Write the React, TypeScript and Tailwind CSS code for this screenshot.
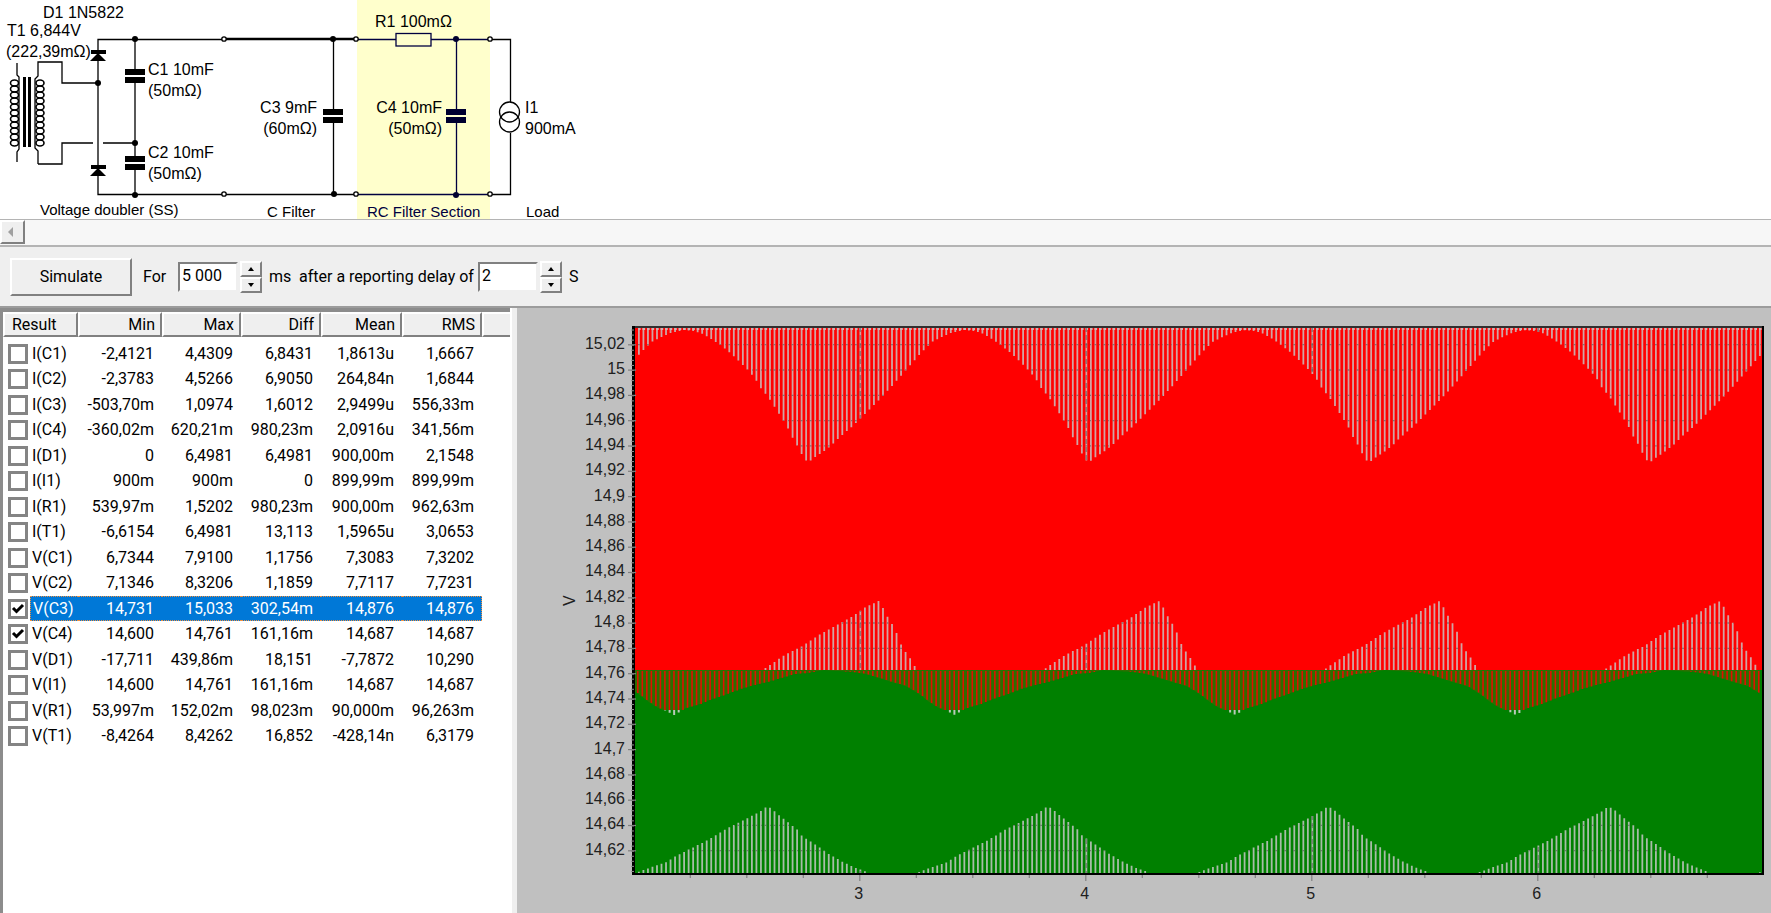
import { useState } from "react";

type Point = [number, number];

const columns = ["Min", "Max", "Diff", "Mean", "RMS"];

const results = [
  { name: "I(C1)", values: ["-2,4121", "4,4309", "6,8431", "1,8613u", "1,6667"] },
  { name: "I(C2)", values: ["-2,3783", "4,5266", "6,9050", "264,84n", "1,6844"] },
  { name: "I(C3)", values: ["-503,70m", "1,0974", "1,6012", "2,9499u", "556,33m"] },
  { name: "I(C4)", values: ["-360,02m", "620,21m", "980,23m", "2,0916u", "341,56m"] },
  { name: "I(D1)", values: ["0", "6,4981", "6,4981", "900,00m", "2,1548"] },
  { name: "I(I1)", values: ["900m", "900m", "0", "899,99m", "899,99m"] },
  { name: "I(R1)", values: ["539,97m", "1,5202", "980,23m", "900,00m", "962,63m"] },
  { name: "I(T1)", values: ["-6,6154", "6,4981", "13,113", "1,5965u", "3,0653"] },
  { name: "V(C1)", values: ["6,7344", "7,9100", "1,1756", "7,3083", "7,3202"] },
  { name: "V(C2)", values: ["7,1346", "8,3206", "1,1859", "7,7117", "7,7231"] },
  { name: "V(C3)", values: ["14,731", "15,033", "302,54m", "14,876", "14,876"] },
  { name: "V(C4)", values: ["14,600", "14,761", "161,16m", "14,687", "14,687"] },
  { name: "V(D1)", values: ["-17,711", "439,86m", "18,151", "-7,7872", "10,290"] },
  { name: "V(I1)", values: ["14,600", "14,761", "161,16m", "14,687", "14,687"] },
  { name: "V(R1)", values: ["53,997m", "152,02m", "98,023m", "90,000m", "96,263m"] },
  { name: "V(T1)", values: ["-8,4264", "8,4262", "16,852", "-428,14n", "6,3179"] },
];

const Capacitor = ({ x, y, color = "#000" }: { x: number; y: number; color?: string }) => (
  <g fill={color}>
    <rect x={x - 10} y={y - 7} width="20" height="6" />
    <rect x={x - 10} y={y + 1} width="20" height="6" />
  </g>
);

const Diode = ({ y }: { y: number }) => (
  <g>
    <rect x="91" y={y} width="15" height="4" />
    <path d={`M98 ${y + 3}L106 ${y + 11}H90Z`} />
  </g>
);

const Terminal = ({ x, y }: { x: number; y: number }) => (
  <circle cx={x} cy={y} r="2.2" fill="#fff" stroke="#000" strokeWidth="1.3" />
);

const turns = Array.from({ length: 11 }, (_, i) => 83 + i * 6);

const Schematic = () => (
  <svg
    width="620"
    height="219"
    viewBox="0 0 620 219"
    className="overflow-visible"
    role="img"
    aria-label="Power supply schematic"
    fontFamily='"Liberation Sans", Arial, sans-serif'
    fontSize="16"
  >
    <rect x="357" y="0" width="133" height="219" fill="#ffffcc" />

    {/* transformer */}
    <g fill="none" stroke="#000" strokeWidth="1.3">
      <path d="M17 63V75L19 77V149L17 152V162" />
      <path d="M38 164V151L35 148V79L38 76V62H62V83H98" />
      <path d="M38 164H62V143H93M103 143H135" />
      {turns.map((y) => (
        <g key={y} strokeWidth="1.6">
          <ellipse cx="14.5" cy={y} rx="4" ry="3" />
          <ellipse cx="40" cy={y} rx="4" ry="3" />
        </g>
      ))}
    </g>
    <rect x="23" y="77" width="3" height="70" />
    <rect x="28" y="77" width="3" height="70" />

    {/* wires */}
    <g fill="none" stroke="#000" strokeWidth="1.3">
      <path d="M224 39.5H98V194.5H357" />
      <path d="M135 39V194M333.5 39V194" />
      <path d="M490 39.5H510.5V102M510.5 133V194.5H490" />
      <ellipse cx="509.5" cy="112" rx="10" ry="10" />
      <ellipse cx="509.5" cy="122" rx="10" ry="10" />
    </g>
    <path d="M224 39H357" stroke="#000" strokeWidth="2.4" />
    <g fill="none" stroke="#000040" strokeWidth="1.3">
      <path d="M357 39.5H396M431 39.5H490M357 194.5H490M456.5 39V194" />
      <rect x="396" y="33.5" width="35" height="12.5" />
    </g>

    <Diode y={50} />
    <Diode y={165} />
    <Capacitor x={135} y={76} />
    <rect x="126" y="75" width="18" height="2" fill="#fff" />
    <Capacitor x={135} y={163} />
    <rect x="126" y="162" width="18" height="2" fill="#fff" />
    <Capacitor x={333} y={116} />
    <rect x="324" y="115" width="18" height="2" fill="#fff" />
    <Capacitor x={456} y={116} color="#000030" />
    <rect x="447" y="115" width="18" height="2" fill="#ffffcc" />

    {[[135, 39], [98, 83], [135, 143], [135, 195], [333, 39], [334, 194]].map(([x, y]) => (
      <circle key={`${x}-${y}`} cx={x} cy={y} r="3" />
    ))}
    <circle cx="456" cy="39" r="3" fill="#000030" />
    <circle cx="456" cy="195" r="3" fill="#000030" />
    <Terminal x={224} y={39} />
    <Terminal x={224} y={194} />
    <Terminal x={356} y={39} />
    <Terminal x={356} y={194} />
    <Terminal x={490} y={39} />
    <Terminal x={490} y={194} />

    <text x="43" y="18">D1 1N5822</text>
    <text x="7" y="36">T1 6,844V</text>
    <text x="6" y="57">(222,39mΩ)</text>
    <text x="148" y="75">C1 10mF</text>
    <text x="148" y="96">(50mΩ)</text>
    <text x="148" y="158">C2 10mF</text>
    <text x="148" y="179">(50mΩ)</text>
    <text x="317" y="113" textAnchor="end">C3 9mF</text>
    <text x="317" y="134" textAnchor="end">(60mΩ)</text>
    <text x="375" y="27">R1 100mΩ</text>
    <text x="442" y="113" textAnchor="end">C4 10mF</text>
    <text x="442" y="134" textAnchor="end">(50mΩ)</text>
    <text x="525" y="113">I1</text>
    <text x="525" y="134">900mA</text>
    <g fontSize="15">
      <text x="40" y="215">Voltage doubler (SS)</text>
      <text x="267" y="217">C Filter</text>
      <text x="367" y="217" fill="#000040">RC Filter Section</text>
      <text x="526" y="217">Load</text>
    </g>
  </svg>
);

// plot area
const LEFT = 635;
const RIGHT = 1762;
const TOP = 328;
const BOTTOM = 874;
const SPLIT = 671;
const PERIOD = 280.5;

const xOf = (t: number) => 633.7 + (t - 2) * 226;
const yOf = (v: number) => 851.7 - (v - 14.62) * 1265;

// One ripple period of each envelope, x relative to its tip
const redUpper: Point[] = [
  [-125, 331], [-116, 332], [-108, 334], [-99, 339], [-90, 345], [-81, 352], [-72, 360], [-63, 369],
  [-54, 379], [-49, 388], [-40, 399], [-31, 413], [-22, 427], [-18, 436], [-13, 444], [-9, 452],
  [-4, 461], [0, 463], [5, 459], [14, 453], [23, 446], [31, 438], [44, 427], [57, 414], [71, 400],
  [84, 386], [98, 370], [112, 354], [123, 343], [133, 338], [142, 334], [151, 332], [156, 331],
];
const redLower: Point[] = [
  [-116, 671], [-94, 656], [-76, 647], [-58, 635], [-40, 625], [-27, 618], [-13, 608], [0, 602],
  [5, 610], [9, 618], [14, 626], [18, 634], [23, 647], [27, 653], [32, 660], [36, 667], [40, 671],
  [165, 671],
];
const greenUpper: Point[] = [
  [0, 716], [13, 709], [27, 705], [39, 700], [54, 695], [67, 690], [81, 686], [94, 683], [108, 679],
  [121, 675], [135, 674], [150, 671], [179, 673], [193, 675], [206, 679], [219, 683], [233, 687],
  [246, 695], [255, 702], [264, 708], [281, 716],
];
const greenLower: Point[] = [
  [-130, 874], [-117, 869], [-99, 863], [-90, 857], [-72, 848], [-58, 841], [-40, 830], [-22, 821],
  [-5, 812], [0, 808], [5, 809], [14, 817], [23, 824], [32, 831], [36, 837], [50, 846], [63, 855],
  [77, 863], [90, 869], [104, 874], [151, 874],
];

const sample = (curve: Point[], tip: number, x: number) => {
  const start = curve[0][0];
  let d = (x - tip - start) % PERIOD;
  if (d < 0) d += PERIOD;
  d += start;
  for (let i = 1; i < curve.length; i++) {
    const [x1, y1] = curve[i];
    const [x0, y0] = curve[i - 1];
    if (d <= x1) return y0 + ((d - x0) / (x1 - x0)) * (y1 - y0);
  }
  return curve[curve.length - 1][1];
};

const stripes: number[] = [];
for (let x = 638; x < RIGHT - 1; x += 4.52) stripes.push(x);

const bars = (from: (x: number) => number, to: (x: number) => number, w: number, shift = 0) =>
  stripes
    .map((s) => {
      const x = s + shift;
      const a = from(x);
      const b = to(x);
      return b - a > 0.5 ? `M${x.toFixed(2)} ${a.toFixed(1)}h${w}V${b.toFixed(1)}h${-w}z` : "";
    })
    .join("");

const upperBars = bars(() => TOP, (x) => sample(redUpper, 808, x), 1.8);
const comb = bars(() => TOP, () => TOP + 3, 2.6);
const lowerBars = bars((x) => sample(redLower, 877.7, x), () => SPLIT, 1.8);
const greenBars = bars((x) => sample(greenLower, 765, x), () => BOTTOM, 1.8);
const mixBars = bars(() => SPLIT + 1, (x) => Math.min(711, sample(greenUpper, 673, x)), 1.6, -1);
const tipBars = bars(() => 711, (x) => sample(greenUpper, 673, x), 2, -1);

let mixArea = `M${LEFT} ${SPLIT}`;
for (let x = LEFT; x <= RIGHT; x += 3) mixArea += `L${x} ${Math.min(711, sample(greenUpper, 673, x))}`;
mixArea += `V${SPLIT}z`;

const labels: number[] = [];
for (let i = 0; i <= 20; i++) labels.push((1462 + i * 2) / 100);
const minor: number[] = [];
for (let i = 0; i < 108; i++) minor.push(14.604 + i * 0.004);
const quarters = Array.from({ length: 19 }, (_, i) => 2.25 + i * 0.25);

const Chart = () => (
  <svg
    viewBox="517 309 1254 604"
    className="block h-auto w-full"
    role="img"
    aria-label="Voltage over time"
    fontFamily='"Liberation Sans", Arial, sans-serif'
    fontSize="16"
  >
    <defs>
      <clipPath id="gaps">
        <path d={upperBars + lowerBars + greenBars} />
      </clipPath>
    </defs>
    <rect x={LEFT} y={TOP} width={RIGHT - LEFT} height={SPLIT - TOP} fill="#ff0000" />
    <rect x={LEFT} y={SPLIT} width={RIGHT - LEFT} height={BOTTOM - SPLIT} fill="#008000" />
    <path d={upperBars + lowerBars} fill="#d0a4a4" />
    <path d={comb} fill="#d0b4b4" />
    <path d={greenBars} fill="#a8bca8" />
    <path d={mixArea} fill="#2c7000" />
    <path d={mixBars} fill="#e01000" />
    <path d={tipBars} fill="#b8c8b8" />

    {/* grid shows only through the gaps */}
    <g clipPath="url(#gaps)" stroke="#606060" strokeWidth="1.3">
      {labels.map((v) => (
        <path key={v} d={`M${LEFT} ${yOf(v)}H${RIGHT}`} strokeDasharray="6 3" opacity="0.7" />
      ))}
      {[3, 4, 5, 6].map((t) => (
        <path key={t} d={`M${xOf(t)} ${TOP}V${BOTTOM}`} strokeWidth="3" strokeDasharray="5 3" opacity="0.6" />
      ))}
    </g>

    {/* frame */}
    <rect x="632" y="327" width="1132" height="2" fill="#303030" />
    <rect x="632" y="327" width="3" height="549" />
    <rect x="1762" y="327" width="2" height="549" />
    <rect x="632" y="874" width="1132" height="2" />

    {minor.map((v) => (
      <rect key={v} x="631" y={yOf(v)} width="3" height="1" fill="#909090" />
    ))}
    {labels.map((v) => (
      <g key={v}>
        <rect x="628" y={yOf(v) - 0.5} width="8" height="1.2" fill="#808080" />
        <text x="625" y={yOf(v) + 4} textAnchor="end" fill="#202020">
          {String(v).replace(".", ",")}
        </text>
      </g>
    ))}
    {quarters.map((t) => (
      <rect key={t} x={xOf(t) - 0.5} y="876" width="1.2" height={t % 1 === 0 ? 6 : 3} fill="#808080" />
    ))}
    {[3, 4, 5, 6].map((t) => (
      <text key={t} x={xOf(t) - 1} y="900" textAnchor="middle" fill="#202020">
        {t}
      </text>
    ))}
    <text transform="translate(575 607) rotate(-90)" fill="#202020">V</text>
  </svg>
);

const raised = "border-2 border-t-white border-l-white border-r-[#808080] border-b-[#808080] bg-[#efefef]";

const Spinner = ({ label, value, onChange }: { label: string; value: string; onChange: (v: string) => void }) => {
  const step = (delta: number) => {
    const next = Math.max(0, Number(value.replace(/\s/g, "")) + delta);
    onChange(String(next).replace(/\B(?=(\d{3})+$)/g, " "));
  };
  return (
    <div className="flex items-center gap-0.5">
      <input
        aria-label={label}
        value={value}
        onChange={(e) => onChange(e.target.value)}
        className="h-[30px] w-[60px] border-2 border-t-[#808080] border-r-[#efefef] border-b-[#efefef] border-l-[#808080] bg-white pb-0.5 pl-0.5 outline-none"
      />
      <div className="flex flex-col">
        <button aria-label={`Increase ${label}`} onClick={() => step(1)} className={`flex h-4 w-[22px] items-center justify-center ${raised}`}>
          <svg width="6" height="4"><path d="M3 0L6 4H0Z" /></svg>
        </button>
        <button aria-label={`Decrease ${label}`} onClick={() => step(-1)} className={`flex h-4 w-[22px] items-center justify-center ${raised}`}>
          <svg width="6" height="4"><path d="M3 4L6 0H0Z" /></svg>
        </button>
      </div>
    </div>
  );
};

const App = () => {
  const [duration, setDuration] = useState("5 000");
  const [delay, setDelay] = useState("2");
  const [selected, setSelected] = useState("V(C3)");
  const [checked, setChecked] = useState<string[]>(["V(C3)", "V(C4)"]);

  const toggle = (name: string) => {
    setChecked(checked.includes(name) ? checked.filter((n) => n !== name) : [...checked, name]);
  };

  return (
    <div className="flex min-h-screen flex-col bg-[#efefef] font-['Roboto','Liberation_Sans',sans-serif] text-base leading-5 text-black">
      <div className="bg-white">
        <Schematic />
      </div>

      <div className="flex h-7 items-start border-t border-b-2 border-[#b4b4b4] bg-[#f7f7f7]">
        <button aria-label="Scroll left" className={`flex h-6 w-[25px] items-center justify-center pr-1 ${raised}`}>
          <svg width="7" height="12"><path d="M6 1V11L1 6Z" fill="#a0a0a0" /></svg>
        </button>
      </div>

      <div className="flex h-[59px] items-center pl-[10px]">
        <button className={`h-[38px] w-[122px] ${raised}`}>Simulate</button>
        <span className="ml-[11px] w-[35px]">For</span>
        <Spinner label="Duration" value={duration} onChange={setDuration} />
        <span className="ml-[7px] w-[30px]">ms</span>
        <span className="w-[179px] whitespace-nowrap">after a reporting delay of</span>
        <Spinner label="Delay" value={delay} onChange={setDelay} />
        <span className="ml-[7px]">S</span>
      </div>

      <div className="flex flex-1 items-stretch border-t-2 border-[#9c9c9c]">
        <div className="w-[510px] shrink-0 border-t-4 border-l-[3px] border-[#8c8c8c] bg-white">
          <table className="w-full table-fixed border-separate border-spacing-0">
            <colgroup>
              <col className="w-[75px]" />
              <col className="w-[84px]" />
              <col className="w-[79px]" />
              <col className="w-[80px]" />
              <col className="w-[81px]" />
              <col className="w-[80px]" />
              <col />
            </colgroup>
            <thead>
              <tr className="h-[25px]">
                <th className={`pl-[7px] text-left font-normal ${raised}`}>Result</th>
                {columns.map((c) => (
                  <th key={c} className={`pr-[5px] text-right font-normal ${raised}`}>{c}</th>
                ))}
                <th className="border-t-2 border-b-2 border-l-2 border-t-white border-b-[#808080] border-l-white bg-[#efefef]"></th>
              </tr>
              <tr className="h-1"></tr>
            </thead>
            <tbody>
              {results.map((row) => {
                const active = row.name === selected;
                const cell = active ? "border-y border-dotted border-[#f09040] bg-[#0078d7] text-white" : "";
                return (
                  <tr key={row.name} onClick={() => setSelected(row.name)} className="odd:h-[25px] even:h-[26px]">
                    <td className="h-[inherit] p-0">
                      <label className="flex h-full items-center pl-[5px]">
                        <span className="grid shrink-0 place-items-center">
                          <input
                            type="checkbox"
                            checked={checked.includes(row.name)}
                            onChange={() => toggle(row.name)}
                            className="col-start-1 row-start-1 size-5 appearance-none border-[3px] border-[#848484] bg-white"
                          />
                          {checked.includes(row.name) && (
                            <svg width="14" height="14" className="pointer-events-none col-start-1 row-start-1">
                              <path d="M2 6L5.5 9.5L12 3" fill="none" stroke="#000" strokeWidth="3" />
                            </svg>
                          )}
                        </span>
                        <span className={`ml-0.5 flex h-full flex-1 items-center pl-0.5 ${cell} ${active ? "border-l" : ""}`}>
                          {row.name}
                        </span>
                      </label>
                    </td>
                    {row.values.map((v, i) => (
                      <td key={columns[i]} className={`py-0 text-right ${cell} ${active && i === 4 ? "border-r pr-[7px]" : "pr-2"}`}>
                        {v}
                      </td>
                    ))}
                    <td></td>
                  </tr>
                );
              })}
            </tbody>
          </table>
        </div>
        <div className="w-[7px] shrink-0 border-l-2 border-white bg-[#efefef]"></div>
        <div className="min-w-0 flex-1 bg-[#c0c0c0]">
          <Chart />
        </div>
      </div>
    </div>
  );
};

export default App;
